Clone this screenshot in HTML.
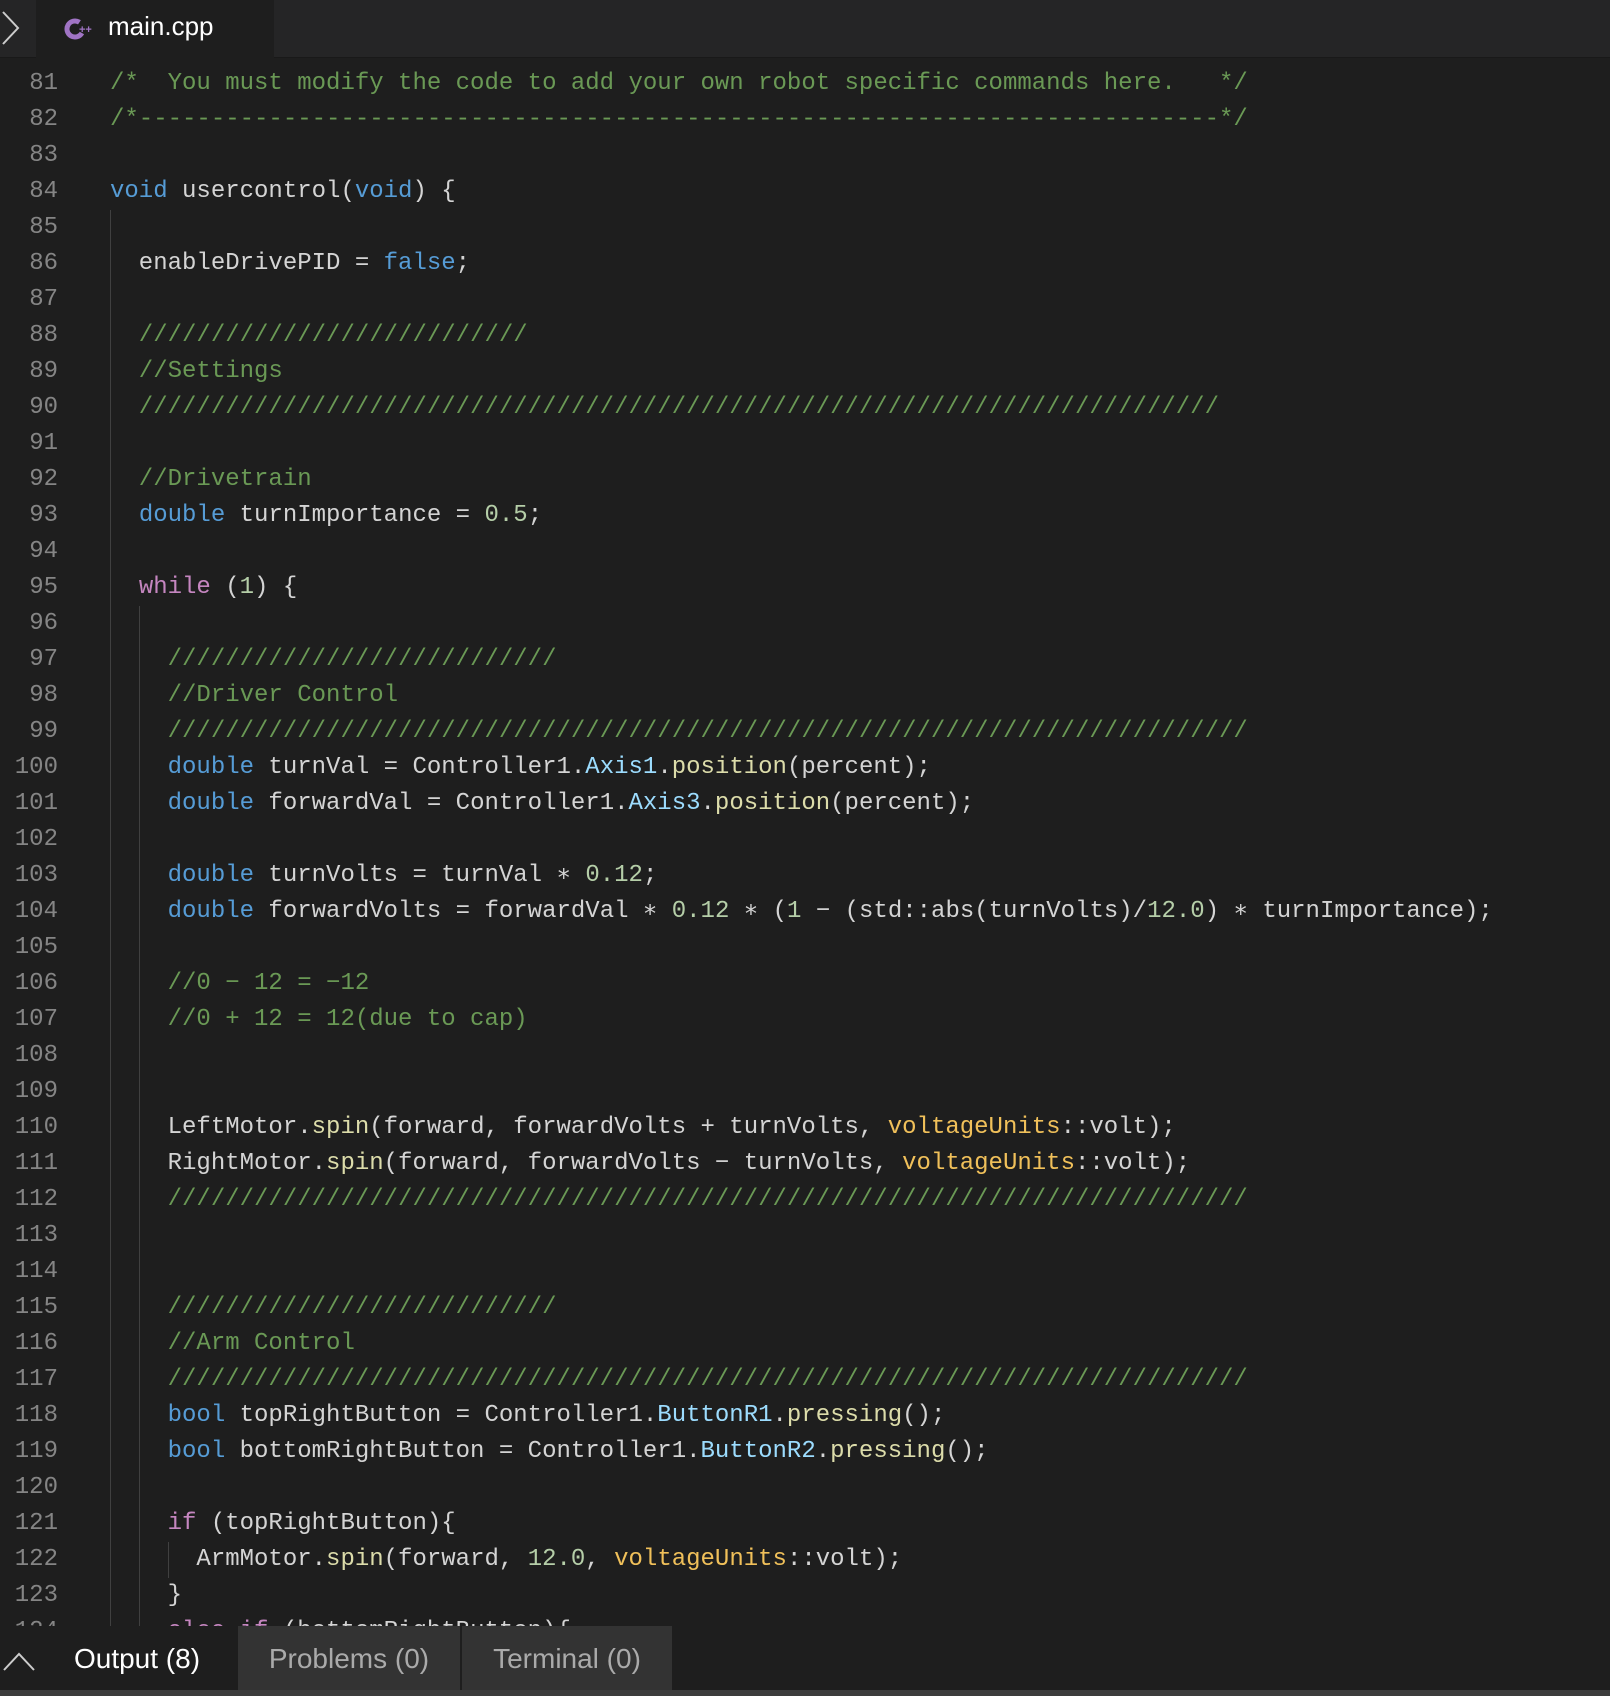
<!DOCTYPE html>
<html><head><meta charset="utf-8"><style>
*{margin:0;padding:0;box-sizing:border-box}
body{width:1610px;height:1696px;background:#1e1e1e;overflow:hidden;position:relative;font-family:"Liberation Mono",monospace}
#tabbar{position:absolute;left:0;top:0;width:1610px;height:58px;background:#252526;border-bottom:1px solid #191919}
#tab{position:absolute;left:36px;top:0;width:238px;height:58px;background:#1e1e1e}
#tab span{position:absolute;left:72px;top:11px;font:26px "Liberation Sans",sans-serif;color:#fff}
#ed{position:absolute;left:0;top:66px;width:1610px}
.l{height:36px;line-height:36px;font-size:24px;white-space:pre;color:#d4d4d4;position:relative}
.n{position:absolute;left:0;width:58px;text-align:right;color:#858585}
.c{position:absolute;left:110px}
.cm{color:#6a9955}.k{color:#569cd6}.p{color:#c586c0}.nu{color:#b5cea8}.f{color:#dcdcaa}.v{color:#9cdcfe}.t{color:#f0c05a}
.g{position:absolute;width:1px;background:#404040}
#panel{position:absolute;left:0;top:1626px;width:1610px;height:64px;background:#1e1e1e}
.pt{position:absolute;top:0;height:64px;font:28px "Liberation Sans",sans-serif;line-height:66px;color:#aaa;text-align:center}
#strip{position:absolute;left:0;top:1690px;width:1610px;height:6px;background:#3c3c3c}
</style></head><body>
<div id="tabbar">
<svg style="position:absolute;left:0;top:8px" width="24" height="40"><path d="M3 4 L18 20 L3 36" stroke="#ccc" stroke-width="2" fill="none"/></svg>
<div id="tab">
<svg style="position:absolute;left:28px;top:16px" width="30" height="26"><circle cx="11" cy="13" r="8" stroke="#a074c4" stroke-width="5" fill="none" stroke-dasharray="38 12" transform="rotate(30 11 13)"/><text x="15" y="17" font-size="11" fill="#a074c4" font-family="Liberation Sans" font-weight="bold">++</text></svg>
<span>main.cpp</span></div>
</div>
<div class="g" style="left:110px;top:210px;height:1416px"></div>
<div class="g" style="left:139px;top:606px;height:1020px"></div>
<div class="g" style="left:168px;top:1542px;height:36px"></div>
<div id="ed">
<div class="l"><span class="n">81</span><span class="c cm">/*  You must modify the code to add your own robot specific commands here.   */</span></div>
<div class="l"><span class="n">82</span><span class="c cm">/*---------------------------------------------------------------------------*/</span></div>
<div class="l"><span class="n">83</span></div>
<div class="l"><span class="n">84</span><span class="c"><span class="k">void</span> usercontrol(<span class="k">void</span>) {</span></div>
<div class="l"><span class="n">85</span></div>
<div class="l"><span class="n">86</span><span class="c">  enableDrivePID = <span class="k">false</span>;</span></div>
<div class="l"><span class="n">87</span></div>
<div class="l"><span class="n">88</span><span class="c cm">  ///////////////////////////</span></div>
<div class="l"><span class="n">89</span><span class="c cm">  //Settings</span></div>
<div class="l"><span class="n">90</span><span class="c cm">  ///////////////////////////////////////////////////////////////////////////</span></div>
<div class="l"><span class="n">91</span></div>
<div class="l"><span class="n">92</span><span class="c cm">  //Drivetrain</span></div>
<div class="l"><span class="n">93</span><span class="c">  <span class="k">double</span> turnImportance = <span class="nu">0.5</span>;</span></div>
<div class="l"><span class="n">94</span></div>
<div class="l"><span class="n">95</span><span class="c">  <span class="p">while</span> (<span class="nu">1</span>) {</span></div>
<div class="l"><span class="n">96</span></div>
<div class="l"><span class="n">97</span><span class="c cm">    ///////////////////////////</span></div>
<div class="l"><span class="n">98</span><span class="c cm">    //Driver Control</span></div>
<div class="l"><span class="n">99</span><span class="c cm">    ///////////////////////////////////////////////////////////////////////////</span></div>
<div class="l"><span class="n">100</span><span class="c">    <span class="k">double</span> turnVal = Controller1.<span class="v">Axis1</span>.<span class="f">position</span>(percent);</span></div>
<div class="l"><span class="n">101</span><span class="c">    <span class="k">double</span> forwardVal = Controller1.<span class="v">Axis3</span>.<span class="f">position</span>(percent);</span></div>
<div class="l"><span class="n">102</span></div>
<div class="l"><span class="n">103</span><span class="c">    <span class="k">double</span> turnVolts = turnVal ∗ <span class="nu">0.12</span>;</span></div>
<div class="l"><span class="n">104</span><span class="c">    <span class="k">double</span> forwardVolts = forwardVal ∗ <span class="nu">0.12</span> ∗ (<span class="nu">1</span> − (std::abs(turnVolts)/<span class="nu">12.0</span>) ∗ turnImportance);</span></div>
<div class="l"><span class="n">105</span></div>
<div class="l"><span class="n">106</span><span class="c cm">    //0 − 12 = −12</span></div>
<div class="l"><span class="n">107</span><span class="c cm">    //0 + 12 = 12(due to cap)</span></div>
<div class="l"><span class="n">108</span></div>
<div class="l"><span class="n">109</span></div>
<div class="l"><span class="n">110</span><span class="c">    LeftMotor.<span class="f">spin</span>(forward, forwardVolts + turnVolts, <span class="t">voltageUnits</span>::volt);</span></div>
<div class="l"><span class="n">111</span><span class="c">    RightMotor.<span class="f">spin</span>(forward, forwardVolts − turnVolts, <span class="t">voltageUnits</span>::volt);</span></div>
<div class="l"><span class="n">112</span><span class="c cm">    ///////////////////////////////////////////////////////////////////////////</span></div>
<div class="l"><span class="n">113</span></div>
<div class="l"><span class="n">114</span></div>
<div class="l"><span class="n">115</span><span class="c cm">    ///////////////////////////</span></div>
<div class="l"><span class="n">116</span><span class="c cm">    //Arm Control</span></div>
<div class="l"><span class="n">117</span><span class="c cm">    ///////////////////////////////////////////////////////////////////////////</span></div>
<div class="l"><span class="n">118</span><span class="c">    <span class="k">bool</span> topRightButton = Controller1.<span class="v">ButtonR1</span>.<span class="f">pressing</span>();</span></div>
<div class="l"><span class="n">119</span><span class="c">    <span class="k">bool</span> bottomRightButton = Controller1.<span class="v">ButtonR2</span>.<span class="f">pressing</span>();</span></div>
<div class="l"><span class="n">120</span></div>
<div class="l"><span class="n">121</span><span class="c">    <span class="p">if</span> (topRightButton){</span></div>
<div class="l"><span class="n">122</span><span class="c">      ArmMotor.<span class="f">spin</span>(forward, <span class="nu">12.0</span>, <span class="t">voltageUnits</span>::volt);</span></div>
<div class="l"><span class="n">123</span><span class="c">    }</span></div>
<div class="l"><span class="n">124</span><span class="c">    <span class="p">else if</span> (bottomRightButton){</span></div>
</div>
<div id="panel">
<svg style="position:absolute;left:2px;top:18px" width="34" height="30"><path d="M2 26 L17 10 L32 26" stroke="#ccc" stroke-width="2" fill="none"/></svg>
<div class="pt" style="left:36px;width:202px;color:#fff">Output (8)</div>
<div class="pt" style="left:238px;width:222px;background:#333">Problems (0)</div>
<div class="pt" style="left:462px;width:210px;background:#333">Terminal (0)</div>
</div>
<div id="strip"></div>
</body></html>
